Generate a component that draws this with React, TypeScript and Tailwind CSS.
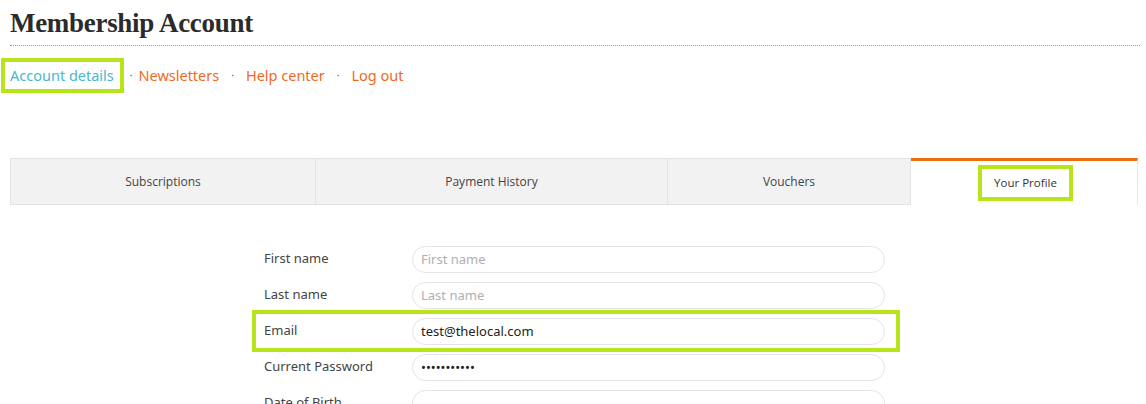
import React from "react";

const tabs = [
  { label: "Subscriptions", w: "w-[306px]" },
  { label: "Payment History", w: "w-[352px]" },
  { label: "Vouchers", w: "w-[243px]" },
];

function Field({
  label,
  placeholder,
  value,
  type = "text",
}: {
  label: string;
  placeholder?: string;
  value?: string;
  type?: string;
}) {
  return (
    <div className="flex items-center h-[36px]">
      <label className="w-[148px] text-[13px] text-[#444]">{label}</label>
      <input
        type={type}
        placeholder={placeholder}
        defaultValue={value}
        readOnly
        className="w-[473px] h-[27px] rounded-full border border-[#e3e3ea] px-2 text-[13px] text-[#222] placeholder:text-[#b0b0b0] outline-none"
      />
    </div>
  );
}

export default function App() {
  return (
    <div className="w-[1146px] h-[404px] overflow-hidden bg-white font-['Noto_Sans',sans-serif]">
      <div className="pl-[10px] pr-[6px]">
        <h1 className="pt-[8px] h-[45px] text-[27px] font-bold text-[#2b2b2b] font-['Liberation_Serif',serif] leading-[30px] tracking-[-0.3px]">
          Membership Account
        </h1>
        <div className="border-b border-dotted border-[#9a9a9a]" />
      </div>

      <nav className="flex items-center mt-[12px] h-[35px] text-[14.5px]">
        <span className="ml-[1px] border-4 border-[#b6e619] h-[35px] pl-[5px] pr-[6px] flex items-center text-[#46b8cc]">
          Account details
        </span>
        <span className="mx-[6px] text-[#555] text-[10px]">·</span>
        <a className="text-[#ef6a1e]">Newsletters</a>
        <span className="mx-[12px] text-[#555] text-[10px]">·</span>
        <a className="text-[#ef6a1e]">Help center</a>
        <span className="mx-[12px] text-[#555] text-[10px]">·</span>
        <a className="text-[#ef6a1e]">Log out</a>
      </nav>

      <div className="flex ml-[10px] mt-[65px] h-[47px] font-['Open_Sans',sans-serif] text-[12px] text-[#444]">
        {tabs.map((t) => (
          <div
            key={t.label}
            className={`${t.w} bg-[#f2f2f2] border border-[#e3e3e3] border-l-0 first:border-l flex items-center justify-center`}
          >
            {t.label}
          </div>
        ))}
        <div className="w-[227px] border-t-[3px] border-t-[#ee6d0a] border-r border-r-[#e8e8e8] flex items-center justify-center">
          <span className="ml-[3px] border-4 border-[#b6e619] h-[36px] px-[12px] flex items-center text-[#333] text-[11.5px]">
            Your Profile
          </span>
        </div>
      </div>

      <div className="ml-[264px] mt-[36px]">
        <Field label="First name" placeholder="First name" />
        <Field label="Last name" placeholder="Last name" />
        <div className="-ml-[12px] w-[648px] border-4 border-[#b6e619] h-[42px] -my-[3px] pl-[8px] flex items-center">
          <Field label="Email" value="test@thelocal.com" />
        </div>
        <Field label="Current Password" type="password" value="•••••••••••" />
        <Field label="Date of Birth" />
      </div>
    </div>
  );
}
